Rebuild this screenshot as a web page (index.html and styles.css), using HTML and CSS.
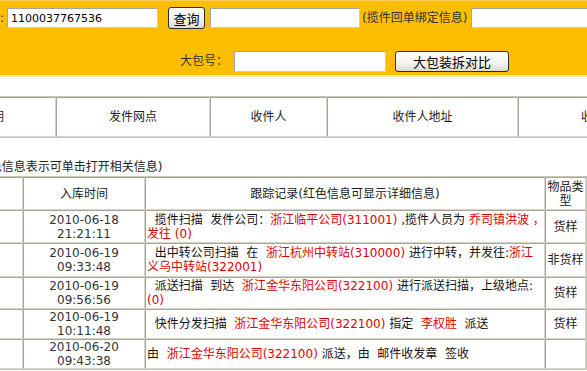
FILE: index.html
```html
<!DOCTYPE html>
<html lang="zh-CN">
<head>
  <meta charset="UTF-8" />
  <title>快件跟踪查询</title>
  <link rel="stylesheet" href="styles.css">
</head>
<body>
  <div class="search-bar">
    <div class="search-row">
      <label class="label-no">快件单号:</label>
      <input class="txt txt-no" value="1100037767536" />
      <button class="btn btn-query">查询</button>
      <input class="txt txt-bind" />
      <span class="hint">(揽件回单绑定信息)</span>
      <input class="txt txt-more" />
    </div>
    <div class="search-row row-bag">
      <label class="label-bag">大包号：</label>
      <input class="txt txt-bag" />
      <button class="btn btn-bag">大包装拆对比</button>
    </div>
  </div>

  <table class="grid info-table">
    <tr>
      <th class="c-date">寄件日期</th>
      <th class="c-site">发件网点</th>
      <th class="c-name">收件人</th>
      <th class="c-addr">收件人地址</th>
      <th class="c-tel">收件人电话</th>
    </tr>
  </table>

  <p class="note">(红色信息表示可单击打开相关信息)</p>

  <table class="grid track-table">
    <tr>
      <th class="c-no"></th>
      <th class="c-time">入库时间</th>
      <th class="c-log">跟踪记录(红色信息可显示详细信息)</th>
      <th class="c-type">物品类型</th>
    </tr>
    <tr class="r33">
      <td></td>
      <td class="time">2010-06-18<br>21:21:11</td>
      <td class="log">&nbsp;&nbsp;揽件扫描&nbsp;&nbsp;发件公司：<span class="red">浙江临平公司(311001)</span> ,揽件人员为 <span class="red">乔司镇洪波 ，<br>发往 (0)</span></td>
      <td class="type">货样</td>
    </tr>
    <tr class="r34">
      <td></td>
      <td class="time">2010-06-19<br>09:33:48</td>
      <td class="log">&nbsp;&nbsp;出中转公司扫描&nbsp;&nbsp;在&nbsp;&nbsp;<span class="red">浙江杭州中转站(310000)</span> 进行中转，并发往:<span class="red">浙江<br>义乌中转站(322001)</span></td>
      <td class="type">非货样</td>
    </tr>
    <tr class="r32">
      <td></td>
      <td class="time">2010-06-19<br>09:56:56</td>
      <td class="log">&nbsp;&nbsp;派送扫描&nbsp;&nbsp;到达&nbsp;&nbsp;<span class="red">浙江金华东阳公司(322100)</span> 进行派送扫描，上级地点:<br><span class="red">(0)</span></td>
      <td class="type">货样</td>
    </tr>
    <tr class="r30">
      <td></td>
      <td class="time">2010-06-19<br>10:11:48</td>
      <td class="log">&nbsp;&nbsp;快件分发扫描&nbsp;&nbsp;<span class="red">浙江金华东阳公司(322100)</span> 指定&nbsp;&nbsp;<span class="red">李权胜</span>&nbsp;&nbsp;派送</td>
      <td class="type">货样</td>
    </tr>
    <tr class="r30">
      <td></td>
      <td class="time">2010-06-20<br>09:43:38</td>
      <td class="log">由&nbsp;&nbsp;<span class="red">浙江金华东阳公司(322100)</span> 派送，由&nbsp;&nbsp;邮件收发章&nbsp;&nbsp;签收</td>
      <td class="type"></td>
    </tr>
  </table>
</body>
</html>
```

FILE: styles.css
```css
body { margin: 0; overflow: hidden; font-family: "DejaVu Sans", "Noto Sans CJK SC", sans-serif; font-size: 12px; line-height: 14px; color: #222; background: #fff; }

/* top search bar */
.search-bar { height: 68px; padding-top: 6px; background: #fdbe02; border-top: 1px solid #fcd052; border-bottom: 2px solid #fce9b0; }
.search-row { display: flex; align-items: center; height: 22px; }
.search-row > * { flex: none; }
.row-bag { margin-top: 21px; }
.label-no { width: 100px; margin-left: -96px; text-align: right; }
.label-bag { margin-left: 180px; margin-right: 6px; color: #333; }
.txt { box-sizing: border-box; width: 151px; height: 20px; padding: 0 3px; border: 1px solid #a5a39b; border-right-color: #cfcdc4; border-bottom-color: #cfcdc4; background: #fff; font: 11px "DejaVu Sans", sans-serif; color: #000; outline: none; }
.txt-no { margin-left: 3px; }
.txt-bind { margin-left: 5px; width: 150px; }
.txt-more { margin-left: 4px; }
.txt-bag { width: 152px; height: 21px; }
.hint { margin-left: 2px; color: #333; white-space: nowrap; }
.btn { box-sizing: border-box; height: 22px; padding: 0; border: 1px solid #2d2d2d; border-radius: 3px; background: linear-gradient(#ffffff, #f3f2ed 60%, #dcdad0); font: 13px "Noto Sans CJK SC", sans-serif; color: #000; }
.btn-query { margin-left: 10px; width: 37px; }
.btn-bag { margin-left: 9px; width: 114px; height: 21px; }

/* tables */
.grid { border-collapse: separate; border-spacing: 0; table-layout: fixed; border: 1px solid #c9c6ba; }
.grid th, .grid td { box-sizing: border-box; border: 1px solid #d6d3c8; border-top-color: #a9a697; border-left-color: #a9a697; font-weight: normal; }
.grid th { text-align: center; vertical-align: middle; }

.info-table { margin: 19px 0 0 -97px; width: 802px; }
.info-table th { height: 40px; }
.c-date { width: 152px; }
.c-site { width: 154px; }
.c-name { width: 117px; }
.c-addr { width: 191px; }
.c-tel { width: 186px; }

.note { margin: 22px 0 2px -27px; }

.track-table { margin-left: -78px; width: 665px; }
.track-table th { height: 33px; padding: 0 1px; }
.c-no { width: 100px; }
.c-time { width: 122px; }
.c-log { width: 400px; }
.c-type { width: 41px; }
.track-table td { padding: 0 1px; vertical-align: middle; }
.r34 td { height: 34px; }
.r33 td { height: 33px; }
.r32 td { height: 32px; }
.r30 td { height: 30px; }
.time { text-align: center; color: #333; }
.log { text-align: left; color: #111; white-space: nowrap; overflow: hidden; }
.type { text-align: center; }
.red { color: #e10000; }
```
